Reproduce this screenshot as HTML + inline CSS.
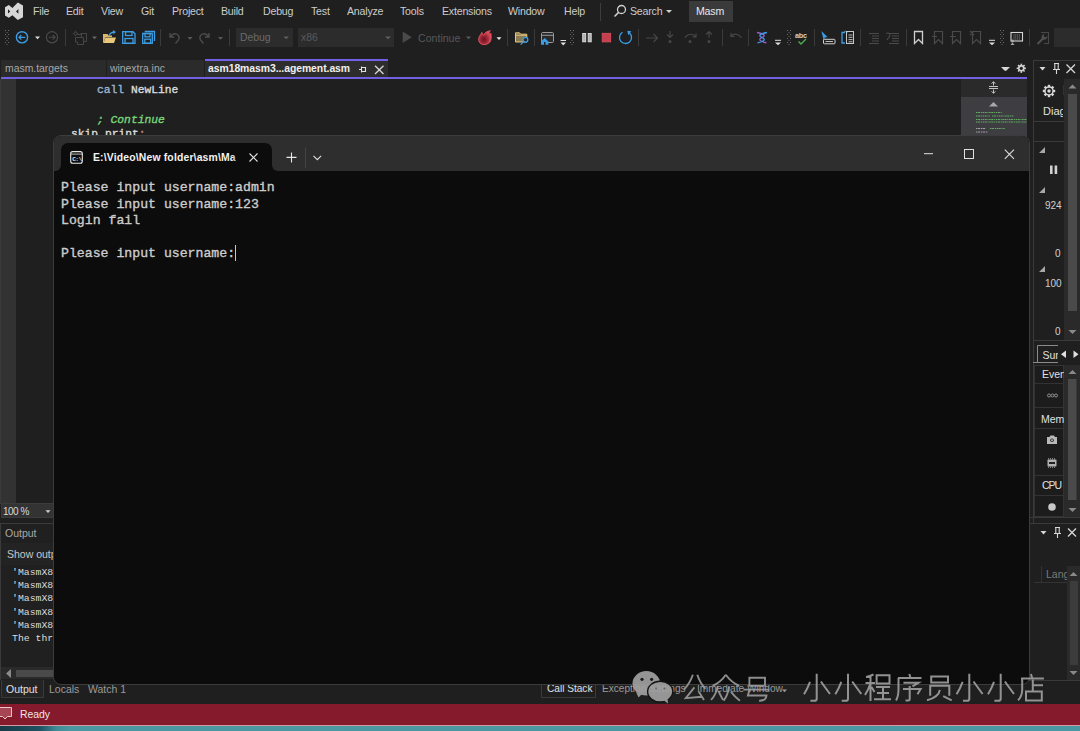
<!DOCTYPE html>
<html><head><meta charset="utf-8">
<style>
*{margin:0;padding:0;box-sizing:border-box}
html,body{width:1080px;height:731px;overflow:hidden;background:#1f1f1f;font-family:"Liberation Sans",sans-serif;color:#d6d6d6}
.a{position:absolute}
.t{position:absolute;white-space:nowrap;line-height:1}
.mono{font-family:"Liberation Mono",monospace}
.menu{font-size:10.6px;letter-spacing:-0.2px;color:#cccccc;top:6px}
.sep{position:absolute;width:1px;background:#3d3d3d}
.dd{position:absolute;width:0;height:0;border-left:3px solid transparent;border-right:3px solid transparent;border-top:3px solid #d0d0d0}
</style></head><body>

<!-- MENU BAR -->
<div class="a" style="left:0;top:0;width:1080px;height:24px;background:#1f1f1f"></div>
<svg class="a" style="left:0;top:0" width="30" height="24" viewBox="0 0 30 24">
<path d="M5 7.2 L8.8 5 L12.4 8 L17.8 2.6 L23 5.5 V17.2 L17.8 20 L12.4 15.2 L8.8 17.8 L5 15.6 Z M8 9.3 L10.2 11.5 L8 13.6 Z M18.4 9 V13.8 L16 11.4 Z" fill="#d6d6d6" fill-rule="evenodd"/>
</svg>
<div class="t menu" style="left:33px">File</div>
<div class="t menu" style="left:66px">Edit</div>
<div class="t menu" style="left:101px">View</div>
<div class="t menu" style="left:141px">Git</div>
<div class="t menu" style="left:172px">Project</div>
<div class="t menu" style="left:221px">Build</div>
<div class="t menu" style="left:263px">Debug</div>
<div class="t menu" style="left:311px">Test</div>
<div class="t menu" style="left:347px">Analyze</div>
<div class="t menu" style="left:400px">Tools</div>
<div class="t menu" style="left:442px">Extensions</div>
<div class="t menu" style="left:508px">Window</div>
<div class="t menu" style="left:564px">Help</div>
<div class="sep" style="left:600px;top:3px;height:18px"></div>
<svg class="a" style="left:613px;top:4px" width="14" height="14" viewBox="0 0 14 14"><circle cx="8.5" cy="5.5" r="4" fill="none" stroke="#cfcfcf" stroke-width="1.3"/><path d="M5.6 8.4 L1.5 12.5" stroke="#cfcfcf" stroke-width="1.5"/></svg>
<div class="t menu" style="left:630px">Search</div>
<div class="dd" style="left:666px;top:10px"></div>
<div class="a" style="left:689px;top:1px;width:44px;height:21px;background:#3a3a3a"></div>
<div class="t menu" style="left:696px;color:#e8e8e8">Masm</div>

<!-- TOOLBAR -->
<svg class="a" style="left:0;top:0" width="1080" height="56" viewBox="0 0 1080 56">
<g fill="#6a6a6a">
<!-- grips -->
<g id="grip"><rect x="5" y="30" width="1" height="1"/><rect x="8" y="30" width="1" height="1"/><rect x="6.5" y="32" width="1" height="1"/><rect x="5" y="34" width="1" height="1"/><rect x="8" y="34" width="1" height="1"/><rect x="6.5" y="36" width="1" height="1"/><rect x="5" y="38" width="1" height="1"/><rect x="8" y="38" width="1" height="1"/><rect x="6.5" y="40" width="1" height="1"/><rect x="5" y="42" width="1" height="1"/><rect x="8" y="42" width="1" height="1"/><rect x="6.5" y="44" width="1" height="1"/></g>
<use href="#grip" x="565"/><use href="#grip" x="782"/><use href="#grip" x="995"/>
</g>
<!-- separators -->
<g fill="#3a3a3a">
<rect x="65" y="29" width="1" height="17"/><rect x="160" y="29" width="1" height="17"/><rect x="229" y="29" width="1" height="17"/>
<rect x="507" y="29" width="1" height="17"/><rect x="534" y="29" width="1" height="17"/><rect x="638" y="29" width="1" height="17"/>
<rect x="722" y="29" width="1" height="17"/><rect x="748" y="29" width="1" height="17"/><rect x="814" y="29" width="1" height="17"/>
<rect x="860" y="29" width="1" height="17"/><rect x="906" y="29" width="1" height="17"/><rect x="1029" y="29" width="1" height="17"/>
</g>
<!-- back / forward -->
<circle cx="22" cy="37.3" r="5.6" fill="none" stroke="#3c9de4" stroke-width="1.4"/>
<path d="M25.3 37.3 H19 M21.3 35 L19 37.3 L21.3 39.6" fill="none" stroke="#3c9de4" stroke-width="1.2"/>
<path d="M35 36.5 H40 L37.5 39.3 Z" fill="#e0e0e0"/>
<circle cx="52" cy="37.3" r="5.6" fill="none" stroke="#4a4a4a" stroke-width="1.2"/>
<path d="M48.7 37.3 H55 M52.7 35 L55 37.3 L52.7 39.6" fill="none" stroke="#4a4a4a" stroke-width="1.1"/>
<!-- new project icon -->
<g fill="none" stroke="#474747" stroke-width="1">
<path d="M80.5 33.5 H86.5 V41.5 H84"/><path d="M75.5 37.5 H83.5 V44.5 H77.5 V42 H75.5 Z"/><path d="M77.5 34.5 H81.5 V37.5"/>
<circle cx="75.5" cy="33.5" r="1.5"/>
</g>
<g stroke="#474747" stroke-width="0.8"><path d="M75.5 30.8 V32 M75.5 35 V36.2 M72.8 33.5 H74 M77 33.5 H78.2"/></g>
<path d="M92 36.5 H97 L94.5 39.3 Z" fill="#666"/>
<!-- open folder -->
<path d="M103 34 H107.5 L108.5 35.5 H112 V37 H105.5 L103.5 43 H103 Z" fill="#d9b86c"/>
<path d="M105.5 37.5 H116 L114 43 H103.5 Z" fill="#e8c878"/>
<path d="M109 36 Q110 32.5 114 32" fill="none" stroke="#3c9de4" stroke-width="1.3"/><path d="M113 30 L116 32 L113.3 34.2 Z" fill="#3c9de4"/>
<!-- save -->
<g fill="none" stroke="#3c9de4" stroke-width="1.3">
<path d="M122.7 31.7 H133 L135 33.7 V43.3 H122.7 Z"/><rect x="125.5" y="31.7" width="6.5" height="3.8"/><rect x="125" y="38.5" width="8" height="4.8"/>
<path d="M144.7 31.5 H154.5 V41"/><path d="M142.7 33.5 H152.3 V43.3 H142.7 Z"/><rect x="145" y="33.5" width="5" height="3.3"/><rect x="144.8" y="39.2" width="5.8" height="4"/>
</g>
<!-- undo redo -->
<g fill="none" stroke="#4e4e4e" stroke-width="1.3">
<path d="M170 33 V37 H174 M170.5 36.5 Q173 33 176.5 34 Q180.5 36 178.5 40 L175.5 43.5"/>
<path d="M209 33 V37 H205 M208.5 36.5 Q206 33 202.5 34 Q198.5 36 200.5 40 L203.5 43.5"/>
</g>
<path d="M187.5 37 H192.5 L190 39.7 Z M218 37 H223 L220.5 39.7 Z" fill="#5a5a5a"/>
<!-- debug / x86 -->
<rect x="236" y="28" width="57" height="19" fill="#2c2c2c"/>
<rect x="298" y="28" width="96" height="19" fill="#2c2c2c"/>
<path d="M283.5 36.5 H289 L286.2 39.3 Z M385 36.5 H391 L388 39.3 Z" fill="#5e5e5e"/>
<!-- continue -->
<path d="M402.7 31.5 L411.8 37.3 L402.7 43 Z" fill="#4a4a4a"/>
<path d="M466 36.5 H471 L468.5 39.3 Z" fill="#5a5a5a"/>
<!-- fire -->
<defs><radialGradient id="fg" cx="0.42" cy="0.62" r="0.55"><stop offset="0" stop-color="#6a1020"/><stop offset="0.55" stop-color="#a02a38"/><stop offset="1" stop-color="#e04a58"/></radialGradient></defs>
<path d="M484 44.6 C480 44.6 477.9 41.5 478.9 37.8 C479.5 35.4 481.3 34 481.8 32.4 C482.5 33.8 482.8 34.8 483.4 35.3 C484.4 32.8 487.3 31 490.3 30.7 C489 32.2 488.8 33.6 489.5 34.6 C490 34.2 490.6 33.7 491 33.2 C490.9 35.2 491.6 37.3 490.8 40.2 C490 43 487.4 44.6 484 44.6 Z" fill="url(#fg)" stroke="#e45262" stroke-width="0.9"/>
<path d="M496.5 37.2 H501.5 L499 40 Z" fill="#e8e8e8"/>
<!-- folder search -->
<path d="M515.5 32.8 H519.5 L520.8 34.2 H526.8 V42 H515.5 Z" fill="#8a7a52" stroke="#e2c77e" stroke-width="1"/>
<path d="M515.5 35.3 H526.8" stroke="#e2c77e" stroke-width="0.9"/>
<circle cx="525.5" cy="39.8" r="2.4" fill="#1f2a33" stroke="#3c9de4" stroke-width="1.2"/><path d="M523.8 41.6 L520.6 44.6" stroke="#3c9de4" stroke-width="1.3"/>
<!-- window home -->
<rect x="541.5" y="32.5" width="12" height="10" rx="1.2" fill="#2a2a2a" stroke="#9a9a9a" stroke-width="1"/><path d="M541.5 35.3 H553.5" stroke="#9a9a9a" stroke-width="1"/>
<path d="M541 41.5 L544.7 38 L548.4 41.5 V44.8 H541 Z" fill="#3c9de4"/><rect x="544" y="42" width="1.5" height="2.8" fill="#1f1f1f"/>
<path d="M560.5 40.5 H566" stroke="#e0e0e0" stroke-width="1"/><path d="M560.5 42.5 H566 L563.25 45.5 Z" fill="#e0e0e0"/>
<!-- pause stop restart -->
<rect x="582.7" y="33.5" width="3" height="8.3" fill="#b0b0b0" stroke="#e0e0e0" stroke-width="0.9"/><rect x="588.2" y="33.5" width="3" height="8.3" fill="#b0b0b0" stroke="#e0e0e0" stroke-width="0.9"/>
<rect x="602.2" y="33.3" width="8.5" height="8.6" fill="#c4404e" stroke="#e05060" stroke-width="0.8"/>
<path d="M629.5 33 A6 6 0 1 1 622.5 32.3" fill="none" stroke="#3c9de4" stroke-width="1.3"/><path d="M627.3 30.8 L631.3 31.2 L628.3 35.3 Z" fill="#3c9de4"/>
<!-- step arrows -->
<g fill="none" stroke="#474747" stroke-width="1.2">
<path d="M646 38 H657.5 M653.5 34 L657.5 38 L653.5 42"/>
<path d="M670 31 V37.5 M667 34.5 L670 37.5 L673 34.5"/>
<path d="M684.8 37.5 Q690 31.5 695.5 36.5 M696 33.5 V37 H692.5"/>
<path d="M709 37.5 V31.5 M706 34.5 L709 31.5 L712 34.5"/>
<path d="M741.5 37.5 Q736 31.5 731 36 M731 33 V36.5 H734.5"/>
</g>
<g fill="#474747"><circle cx="670" cy="41.6" r="1.5"/><circle cx="690" cy="41.6" r="1.5"/><circle cx="709" cy="41.6" r="1.5"/></g>
<!-- colorful -->
<path d="M757 32.5 Q768 34.5 762 37.5 Q756 40.5 766.5 42.8" fill="none" stroke="#9a5ec8" stroke-width="1.3"/>
<path d="M767 32.5 Q756 34.5 762 37.5 Q768 40.5 757.5 42.8" fill="none" stroke="#3c9de4" stroke-width="1.3"/>
<path d="M775 40.3 H781" stroke="#e0e0e0" stroke-width="1"/><path d="M775 42.5 H781 L778 45.3 Z" fill="#e0e0e0"/>
<!-- abc -->
<text x="795" y="38" font-family="Liberation Sans" font-size="7.3" font-weight="bold" fill="#d0d0d0" letter-spacing="-0.2">abc</text>
<path d="M798.5 41.5 L801 44 L806 39" fill="none" stroke="#4caf50" stroke-width="1.4"/>
<!-- cursor & box -->
<path d="M821.3 31 L827.5 37 L824.8 37.5 L823.8 40.5 Z" fill="#3c9de4"/>
<rect x="823.5" y="39.3" width="11.5" height="4.5" rx="0.8" fill="none" stroke="#d0d0d0" stroke-width="1"/><path d="M825.5 41.5 H833" stroke="#d0d0d0" stroke-width="0.9"/>
<path d="M845 32.5 H842 V43 H845" fill="none" stroke="#3c9de4" stroke-width="1.3"/><path d="M843 33 Q845 30 848 32" fill="none" stroke="#3c9de4" stroke-width="1"/>
<rect x="846.5" y="31.5" width="7" height="12" fill="none" stroke="#c8c8c8" stroke-width="1"/>
<g stroke="#c8c8c8" stroke-width="0.9"><path d="M848.5 35 H852.5 M848.5 37.3 H852.5 M848.5 39.6 H852.5 M848.5 41.8 H852.5"/></g>
<!-- indent -->
<g stroke="#4a4a4a" stroke-width="1"><path d="M869 33.5 H879 M872 36 H879 M872 38.5 H879 M872 41 H879 M869 43.5 H879"/>
<path d="M889 33.5 H899 M892 36 H899 M892 38.5 H899 M892 41 H899 M889 43.5 H899"/></g>
<path d="M886 33.5 Q889.5 32 890 35.5 L887 40" fill="none" stroke="#4a4a4a" stroke-width="1.1"/>
<!-- bookmarks -->
<path d="M914.5 31.5 H922.5 V43.5 L918.5 39.5 L914.5 43.5 Z" fill="none" stroke="#d0d0d0" stroke-width="1.3"/>
<g fill="none" stroke="#4a4a4a" stroke-width="1.2">
<path d="M934.5 31.5 H942.5 V43.5 L938.5 39.5 L934.5 43.5 Z M932 36.5 H937"/>
<path d="M952.5 31.5 H960.5 V43.5 L956.5 39.5 L952.5 43.5 Z M950 36.5 H956"/>
<path d="M972.5 31.5 H980.5 V43.5 L976.5 39.5 L972.5 43.5 Z M970 31 L974 35 M974 31 L970 35"/>
</g>
<path d="M989 40.3 H995" stroke="#e0e0e0" stroke-width="1"/><path d="M989 42.5 H995 L992 45.3 Z" fill="#e0e0e0"/>
<!-- breakpoints window icon -->
<rect x="1011" y="32.5" width="11.5" height="8.5" fill="#1f1f1f" stroke="#d8d8d8" stroke-width="1.1"/>
<g stroke="#b0b0b0" stroke-width="0.8" stroke-dasharray="1 0.8"><path d="M1013.5 35 H1020.5 M1013.5 37 H1020.5 M1013.5 39 H1020.5"/></g>
<circle cx="1012.5" cy="41" r="1.5" fill="#a8a8a8"/><path d="M1010.5 45 L1012.5 42.5 L1014.5 45 Z" fill="#a8a8a8"/>
<!-- wrench -->
<path d="M1041 32.5 H1048.5 V43.5 H1044" fill="none" stroke="#474747" stroke-width="1.1"/>
<path d="M1037.5 44 L1043 38.5" stroke="#505050" stroke-width="2"/>
<path d="M1042 39.5 Q1040.5 35 1044.5 33.8 L1043.5 36.3 L1045.5 37.5 L1047.3 35.8 Q1047.8 39.8 1043.5 39.8 Z" fill="#505050"/>
<rect x="1054" y="28" width="26" height="19" fill="#2c2c2c"/>
</svg>


<div class="t" style="left:240px;top:32.5px;font-size:10.4px;color:#6a6a6a">Debug</div>
<div class="t" style="left:301px;top:32.5px;font-size:10.4px;color:#5a5a5a">x86</div>
<div class="t" style="left:418px;top:32.5px;font-size:10.6px;color:#585858">Continue</div>
<!-- TABS -->
<div class="a" style="left:1px;top:60px;width:105px;height:17px;background:#2b2b2b"></div>
<div class="t" style="left:5px;top:63.5px;font-size:10.4px;color:#a8a8a8">masm.targets</div>
<div class="a" style="left:107px;top:60px;width:97px;height:17px;background:#2b2b2b"></div>
<div class="t" style="left:110px;top:63.5px;font-size:10.4px;color:#a8a8a8">winextra.inc</div>
<div class="a" style="left:205px;top:59px;width:183px;height:18px;background:#2d2d2d;border-top:2px solid #7160e8"></div>
<div class="t" style="left:208px;top:63.5px;font-size:10.4px;font-weight:bold;color:#f0f0f0;letter-spacing:-0.05px">asm18masm3...agement.asm</div>
<svg class="a" style="left:350px;top:60px" width="40" height="17" viewBox="350 60 40 17">
  <path d="M359 69.5 H361.5 M361.5 66.5 V72.5 M361.5 67.5 H365.5 V71.5 H361.5" fill="none" stroke="#e0e0e0" stroke-width="1.1"/>
  <path d="M375 65.8 L383.5 74 M383.5 65.8 L375 74" stroke="#d8d8d8" stroke-width="1.3"/>
</svg>
<div class="a" style="left:1px;top:77px;width:1026px;height:2px;background:#7060e2"></div>
<div class="dd" style="left:1002px;top:67px;border-top-color:#d0d0d0;border-left-width:4px;border-right-width:4px;border-top-width:4px"></div>

<!-- EDITOR -->
<div class="a" style="left:0;top:79px;width:16px;height:425px;background:#323232;border-left:1px solid #3a3a3a"></div>
<div class="t mono" style="left:97px;top:85.2px;font-size:11.3px;color:#9cb4d4;-webkit-text-stroke:0.35px #9cb4d4">call <span style="color:#dcdcdc;-webkit-text-stroke:0.35px #dcdcdc">NewLine</span></div>
<div class="t mono" style="left:97px;top:115.2px;font-size:11.3px;color:#7ad67a;font-style:italic;-webkit-text-stroke:0.35px #7ad67a">; Continue</div>
<div class="t mono" style="left:71px;top:129.2px;font-size:11.3px;color:#dcdcdc;-webkit-text-stroke:0.35px #dcdcdc">skip_print<span style="color:#d08a7a;-webkit-text-stroke:0.35px #d08a7a">:</span></div>

<!-- MINIMAP -->
<div class="a" style="left:961px;top:79px;width:66px;height:18px;background:#2a2a2a"></div>
<div class="a" style="left:961px;top:97px;width:66px;height:40px;background:#3e3e42"></div>
<svg class="a" style="left:940px;top:56px" width="140" height="80" viewBox="940 56 140 80">
  <path d="M1001 67 H1009 L1005 71 Z" fill="#d8d8d8"/>
  <g transform="translate(1021.3 68.3)" fill="#cfcfcf">
    <circle r="3.3"/>
    <rect x="-0.8" y="-4.6" width="1.6" height="9.2"/><rect x="-0.8" y="-4.6" width="1.6" height="9.2" transform="rotate(45)"/><rect x="-0.8" y="-4.6" width="1.6" height="9.2" transform="rotate(90)"/><rect x="-0.8" y="-4.6" width="1.6" height="9.2" transform="rotate(135)"/>
    <circle r="1.6" fill="#1f1f1f"/>
  </g>
  <g stroke="#c0c0c0" stroke-width="1" fill="none">
    <path d="M989 86.5 H998 M989 88.5 H998 M993.5 82 V85.5 M993.5 89.5 V93 M991.5 83.5 L993.5 81.8 L995.5 83.5 M991.5 91.5 L993.5 93.2 L995.5 91.5"/>
  </g>
  <path d="M989 106.5 L993.5 102 L998 106.5 Z" fill="#a8a8a8"/>
  <g stroke="#6ccc6c" stroke-width="1" stroke-dasharray="1.5 0.6 2 0.8 1 0.7" opacity="0.8">
    <path d="M976 112.5 H1002 M976 116 H990 M992 116 H1014 M976 119.5 H1027 M976 122 H1027 M990 128.5 H1005"/>
  </g>
  <g stroke="#bbbbbb" stroke-width="1" stroke-dasharray="1.5 0.6 2 0.8" opacity="0.8"><path d="M976 128.5 H986 M976 132 H988"/></g>
</svg>

<!-- RIGHT PANEL -->
<div class="a" style="left:1033px;top:60px;width:47px;height:464px;background:#1f1f1f;border-left:1px solid #3a3a3a;border-top:1px solid #3a3a3a"></div>
<svg class="a" style="left:1029px;top:56px" width="51" height="650" viewBox="1029 56 51 650">
  <!-- header -->
  <path d="M1039.5 67 H1045.5 L1042.5 70.5 Z" fill="#d8d8d8"/>
  <path d="M1054 63.5 H1059 M1054.8 63.5 V69.5 H1058.2 V63.5 M1053 69.5 H1060 M1056.5 69.5 V74" fill="none" stroke="#d8d8d8" stroke-width="1.1"/>
  <path d="M1066.5 64.5 L1075 73 M1075 64.5 L1066.5 73" stroke="#d8d8d8" stroke-width="1.3"/>
  <!-- scrollbar -->
  <rect x="1064" y="79" width="16" height="262" fill="#2a2a2a"/>
  <rect x="1068" y="94" width="9" height="217" fill="#4a4a4a"/>
  <path d="M1068.5 88.5 L1072.5 84.5 L1076.5 88.5 Z" fill="#8a8a8a"/>
  <path d="M1068.5 330 L1072.5 334 L1076.5 330 Z" fill="#8a8a8a"/>
  <!-- gear -->
  <g transform="translate(1049 91)" fill="#d8d8d8">
    <circle r="4.7"/>
    <g><rect x="-1.2" y="-6.2" width="2.4" height="12.4"/><rect x="-1.2" y="-6.2" width="2.4" height="12.4" transform="rotate(45)"/><rect x="-1.2" y="-6.2" width="2.4" height="12.4" transform="rotate(90)"/><rect x="-1.2" y="-6.2" width="2.4" height="12.4" transform="rotate(135)"/></g>
    <circle r="3.3" fill="#1f1f1f"/>
    <circle r="1.7" fill="#d8d8d8"/>
  </g>
  <rect x="1063" y="85" width="1" height="10" fill="#333"/>
  <path d="M1034 121.5 H1064 M1034 141.5 H1064" stroke="#3a3a3a" stroke-width="1"/>
  <!-- triangles & pause -->
  <path d="M1039 153 L1045 147 V153 Z M1039 193 L1045 187 V193 Z M1039 272 L1045 266 V272 Z" fill="#a8a8a8"/>
  <rect x="1050" y="165.5" width="2.6" height="8.5" fill="#d0d0d0"/><rect x="1054.6" y="165.5" width="2.6" height="8.5" fill="#d0d0d0"/>
  <path d="M1033 340.5 H1080" stroke="#3a3a3a" stroke-width="1"/>
  <!-- Sur tabs -->
  <path d="M1037.5 362 V345.5 H1058" fill="none" stroke="#8a8a8a" stroke-width="1"/>
  <path d="M1033 362.5 H1058" stroke="#8a8a8a" stroke-width="1"/>
  <path d="M1066 350.5 V358 L1061 354.2 Z" fill="#e0e0e0"/>
  <path d="M1073.5 350.5 V358 L1078.5 354.2 Z" fill="#e0e0e0"/>
  <!-- rows -->
  <rect x="1034" y="365" width="30" height="152" fill="#1c1c1c"/>
  <g stroke="#333" stroke-width="1" fill="none">
    <rect x="1034.5" y="365.5" width="29" height="151"/>
    <path d="M1034 383.5 H1064 M1034 407.5 H1064 M1034 428.5 H1064 M1034 475.5 H1064 M1034 495.5 H1064"/>
  </g>
  <rect x="1064" y="365" width="16" height="152" fill="#2a2a2a"/>
  <rect x="1068" y="379" width="8.5" height="121" fill="#4a4a4a"/>
  <path d="M1068.5 374 L1072.5 370 L1076.5 374 Z" fill="#8a8a8a"/>
  <path d="M1068.5 508 L1072.5 512 L1076.5 508 Z" fill="#8a8a8a"/>
  <g fill="none" stroke="#9a9a9a" stroke-width="0.9">
    <circle cx="1049" cy="395.5" r="1.5"/><circle cx="1052.5" cy="395.5" r="1.5"/><circle cx="1056" cy="395.5" r="1.5"/>
  </g>
  <path d="M1047 437 H1049.5 L1050.5 435.5 H1054 L1055 437 H1057 V444 H1047 Z" fill="#b8b8b8"/><circle cx="1052" cy="440.3" r="1.8" fill="#1f1f1f"/><circle cx="1052" cy="440.3" r="1" fill="#b8b8b8"/>
  <rect x="1047.5" y="459.5" width="9" height="7" rx="0.8" fill="#b0b0b0"/><rect x="1049" y="462" width="6" height="2" fill="#1f1f1f"/>
  <path d="M1048.5 458 V459.5 M1050.5 458 V459.5 M1052.5 458 V459.5 M1054.5 458 V459.5 M1048.5 466.5 V468 M1050.5 466.5 V468 M1052.5 466.5 V468 M1054.5 466.5 V468" stroke="#9a9a9a" stroke-width="0.8"/>
  <circle cx="1052" cy="507" r="3.8" fill="#c8c8c8"/>
  <path d="M1030 517.5 H1080" stroke="#3a3a3a" stroke-width="1"/>
  <path d="M1029 523.5 H1080" stroke="#3a3a3a" stroke-width="1"/>
  <!-- second panel -->
  <path d="M1040.5 531 H1046.5 L1043.5 534.5 Z" fill="#d8d8d8"/>
  <path d="M1055 527.5 H1060 M1055.8 527.5 V533.5 H1059.2 V527.5 M1054 533.5 H1061 M1057.5 533.5 V538" fill="none" stroke="#d8d8d8" stroke-width="1.1"/>
  <path d="M1068 528.5 L1076 536.5 M1076 528.5 L1068 536.5" stroke="#d8d8d8" stroke-width="1.3"/>
  <path d="M1034 582.5 H1067 M1041.5 566 V582" stroke="#333" stroke-width="1"/>
  <rect x="1067" y="566" width="13" height="114" fill="#2a2a2a"/>
  <rect x="1070" y="581" width="8" height="84" fill="#3c3c3c"/>
  <path d="M1069.5 576 L1073.5 572 L1077.5 576 Z" fill="#8a8a8a"/>
  <path d="M1069.5 671 L1073.5 675 L1077.5 671 Z" fill="#8a8a8a"/>
  <path d="M1029.5 523 V680" stroke="#3a3a3a" stroke-width="1"/>
  <path d="M1029 680.5 H1080" stroke="#3a3a3a" stroke-width="1"/>
</svg>
<div class="a" style="left:1040px;top:102px;width:23px;height:18px;overflow:hidden"><div class="t" style="left:3px;top:4px;font-size:11px;color:#e0e0e0">Diag</div></div>
<div class="t" style="left:1045px;top:201px;font-size:10px;color:#d0d0d0">924</div>
<div class="t" style="left:1055px;top:249px;font-size:10px;color:#d0d0d0">0</div>
<div class="t" style="left:1045px;top:279px;font-size:10px;color:#d0d0d0">100</div>
<div class="t" style="left:1055px;top:327px;font-size:10px;color:#d0d0d0">0</div>
<div class="a" style="left:1038px;top:346px;width:20px;height:16px;overflow:hidden"><div class="t" style="left:4.5px;top:4px;font-size:10.5px;color:#e0e0e0">Sur</div></div>
<div class="a" style="left:1034px;top:366px;width:30px;height:17px;overflow:hidden"><div class="t" style="left:8px;top:3px;font-size:10.5px;color:#e0e0e0">Even</div></div>
<div class="a" style="left:1034px;top:408px;width:30px;height:20px;overflow:hidden"><div class="t" style="left:7px;top:5.5px;font-size:10.5px;color:#e0e0e0">Mem</div></div>
<div class="t" style="left:1042px;top:480px;font-size:10.5px;color:#e0e0e0;letter-spacing:-1px">CPU</div>
<div class="a" style="left:1042px;top:566px;width:25px;height:16px;overflow:hidden"><div class="t" style="left:4px;top:3px;font-size:10.5px;color:#7a7a7a">Lang</div></div>
<!-- ZOOM BOX -->
<div class="a" style="left:1px;top:503px;width:53px;height:15px;background:#333333;border:1px solid #3c3c3c"></div>
<div class="t" style="left:3px;top:506.5px;font-size:10px;letter-spacing:-0.5px;color:#d8d8d8">100 %</div>
<svg class="a" style="left:0;top:500px" width="60" height="20"><path d="M45.5 10.2 H50.5 L48 13 Z" fill="#d0d0d0"/></svg>

<!-- OUTPUT PANEL -->
<div class="a" style="left:0;top:523px;width:54px;height:157px;background:#202020;border-left:1px solid #3a3a3a;border-top:1px solid #3a3a3a"></div>
<div class="t" style="left:5px;top:528px;font-size:10.5px;color:#a8a8a8">Output</div>
<div class="a" style="left:1px;top:543px;width:53px;height:22px;background:#232323"></div>
<div class="t" style="left:7px;top:549px;font-size:10.5px;color:#c8c8c8">Show output</div>
<div class="t mono" style="left:12px;top:566px;font-size:9.8px;color:#dcdcdc;line-height:13.2px;white-space:pre">'MasmX8
'MasmX8
'MasmX8
'MasmX8
'MasmX8
The thr</div>
<div class="a" style="left:1px;top:667px;width:53px;height:12px;background:#2a2a2a"></div>
<div class="a" style="left:16px;top:670px;width:38px;height:7px;background:#4a4a4a"></div>
<svg class="a" style="left:0;top:660px" width="20" height="20"><path d="M11 9 V18 L6 13.5 Z" fill="#8a8a8a"/></svg>

<!-- BOTTOM TABS -->
<div class="a" style="left:1px;top:680px;width:43px;height:18px;background:#242424;border:1px solid #3a3a3a;border-top:none"></div>
<div class="t" style="left:6px;top:684px;font-size:10.5px;color:#e0e0e0">Output</div>
<div class="t" style="left:49px;top:684px;font-size:10.5px;color:#9a9a9a">Locals</div>
<div class="t" style="left:88px;top:684px;font-size:10.5px;color:#9a9a9a">Watch 1</div>
<div class="a" style="left:541px;top:684px;width:55px;height:14px;border:1px solid #3a3a3a;border-top:none"></div>
<div class="t" style="left:547px;top:684px;font-size:10.1px;color:#e0e0e0">Call Stack</div>
<div class="t" style="left:602px;top:684px;font-size:10.1px;color:#9a9a9a">Exception Settings</div>
<div class="t" style="left:697px;top:684px;font-size:10.1px;color:#9a9a9a">Immediate Window</div>
<svg class="a" style="left:780px;top:684px" width="10" height="14"><path d="M2 5.5 H7 L4.5 8.3 Z" fill="#9a9a9a"/></svg>

<!-- STATUS BAR -->
<div class="a" style="left:0;top:704px;width:1080px;height:21px;background:#861a2d"></div>
<div class="a" style="left:0;top:725px;width:1080px;height:1px;background:#d49aa4"></div>
<div class="a" style="left:0;top:726px;width:1080px;height:5px;background:linear-gradient(90deg,#173a46 0px,#1f5262 40px,#3f8a96 56px,#4b97a1 70px,#4a98a4 1080px)"></div>
<svg class="a" style="left:0;top:704px" width="16" height="20"><path d="M-1 3.5 H11.5 V12.5 H7.5 L5 15 L2.5 12.5 H-1 Z" fill="#a84555" stroke="#e8c8cc" stroke-width="1"/></svg>
<div class="t" style="left:20px;top:709.5px;font-size:10.4px;color:#f0e4e6">Ready</div>

<!-- CONSOLE WINDOW -->
<div class="a" style="left:53px;top:135px;width:977px;height:550px;background:#0c0c0c;border-radius:8px;overflow:hidden;border:1px solid #3c3c3c">
  <div class="a" style="left:0;top:0;width:977px;height:35px;background:#2e2e2e"></div>
  <div class="a" style="left:2px;top:29px;width:6px;height:6px;background:#0c0c0c;border-radius:0 0 0 0"></div>
  <div class="a" style="left:7px;top:7px;width:211px;height:28px;background:#0c0c0c;border-radius:7px 7px 0 0"></div>
  <div class="a" style="left:0;top:29px;width:7px;height:6px;background:#2e2e2e;border-radius:0 0 6px 0"></div>
  <div class="a" style="left:218px;top:29px;width:7px;height:6px;background:#0c0c0c"></div>
  <div class="a" style="left:218px;top:29px;width:7px;height:6px;background:#2e2e2e;border-radius:0 0 0 6px"></div>
  <svg class="a" style="left:16px;top:15px" width="14" height="14" viewBox="0 0 14 14">
    <rect x="0.7" y="0.6" width="11.6" height="11.6" rx="2" fill="none" stroke="#e8e8e8" stroke-width="1.1"/>
    <path d="M1 3.1 H12.3" stroke="#e8e8e8" stroke-width="0.8"/>
    <text x="2.2" y="10.4" font-family="Liberation Mono" font-size="6.2" font-weight="bold" fill="#e0e0e0" letter-spacing="-0.6">C:\</text>
  </svg>
  <div class="t" style="left:39px;top:17px;font-size:10.4px;font-weight:bold;letter-spacing:0.17px;color:#f2f2f2">E:\Video\New folder\asm\Ma</div>
  <div class="a" style="left:178px;top:12px;width:12px;height:18px;background:linear-gradient(90deg,rgba(12,12,12,0),rgba(12,12,12,0.6) 60%,#0c0c0c)"></div>
  <svg class="a" style="left:0;top:0" width="977" height="35" viewBox="0 0 977 35">
    <path d="M195.5 17.5 L203.5 25.5 M203.5 17.5 L195.5 25.5" stroke="#e0e0e0" stroke-width="1.1"/>
    <path d="M232.5 21.4 H242.5 M237.5 16.4 V26.4" stroke="#e8e8e8" stroke-width="1.1"/>
    <path d="M251.5 11.5 V32" stroke="#444" stroke-width="1"/>
    <path d="M259.5 19.8 L263.3 23.6 L267.1 19.8" fill="none" stroke="#e0e0e0" stroke-width="1.1"/>
    <path d="M870 17.7 H879" stroke="#e0e0e0" stroke-width="1"/>
    <rect x="910.5" y="13.5" width="9" height="9" fill="none" stroke="#e0e0e0" stroke-width="1"/>
    <path d="M950.8 13.6 L960 22.8 M960 13.6 L950.8 22.8" stroke="#e0e0e0" stroke-width="1.05"/>
  </svg>
  <div class="t mono" style="left:7px;top:44px;font-size:13.2px;line-height:16.6px;color:#cccccc;white-space:pre;-webkit-text-stroke:0.35px #cccccc">Please input username:admin
Please input username:123
Login fail

Please input username:</div>
  <div class="a" style="left:181px;top:108.6px;width:1px;height:16.4px;background:#c8c8c8"></div>
</div>

<!-- WATERMARK -->
<svg class="a" style="left:0;top:0;opacity:0.9" width="1080" height="731" viewBox="0 0 1080 731">
<g fill="#a3a3a3">
  <ellipse cx="646.3" cy="683.3" rx="13.8" ry="12.2"/>
  <path d="M636 692 L638.5 697.5 L642.5 693.5 Z"/>
</g>
<circle cx="642" cy="679.3" r="1.6" fill="#1a1a1a"/><circle cx="651.6" cy="679.3" r="1.6" fill="#1a1a1a"/>
<ellipse cx="660.2" cy="691.6" rx="12.6" ry="10.4" fill="#a3a3a3" stroke="#141414" stroke-width="1.4"/>
<path d="M664 700.5 L668 703.5 L667.5 698 Z" fill="#a3a3a3"/>
<circle cx="656.2" cy="688.5" r="1.1" fill="#1a1a1a" opacity="0.4"/><circle cx="664.5" cy="688.5" r="1.1" fill="#1a1a1a" opacity="0.4"/>
<g fill="none" stroke="#9c9c9c" stroke-width="1.9" stroke-linecap="butt" stroke-linejoin="miter">
  <!-- 公 -->
  <g transform="translate(684 674)"><path d="M8.9 0.7 Q6 9 0 15.6 M13.3 0.7 Q16 9 21.5 14.8 M10.4 13.3 L1.8 24.2 L17.8 22.8 M14.8 17.8 L20 25.9"/></g>
  <!-- 众 -->
  <g transform="translate(711 674)"><path d="M14.8 0.7 Q10 8 1.5 11.9 M14.8 0.7 Q20 8 28.3 11.9 M6.8 11.9 Q5 21 0 25.9 M7.4 17 L11.9 25.9 M18 12.6 Q17 21 12.6 26.7 M20 17.8 Q24 23 28.9 26.7"/></g>
  <!-- 号 -->
  <g transform="translate(743.5 674)"><path d="M5.9 3.7 H21.5 V11.9 H5.9 Z M0 15.6 H25.9 M6 15.6 L4.4 21.5 H23 Q22.5 27 15.6 26.7"/></g>
</g>
<g fill="none" stroke="#a0a0a0" stroke-width="2.0" stroke-linecap="butt">
  <!-- 小 -->
  <g id="xiao" transform="translate(803.4 673.8)"><path d="M13.3 0 V25.2 Q13.3 27 11 27 H7 M6.6 8 Q4 15 0.6 20.5 M17.5 7.7 Q22 14 26.6 20.2"/></g>
  <use href="#xiao" x="31.3"/>
  <!-- 程 -->
  <g transform="translate(865.4 673.8)"><path d="M8.1 0.7 Q4.5 2.5 0.6 3.2 M0.1 9.2 H9.6 M5.1 2.2 V27.2 M4.8 10.2 Q3 16 -0.4 21.2 M6.1 13.2 L9.1 18.2 M11.2 1.4 H24.1 V9.6 H11.2 Z M10.6 13.2 H24.6 M11.6 19.2 H23.6 M8.6 25.5 H25.6 M17.6 13.2 V25.5"/></g>
  <!-- 序 -->
  <g transform="translate(895 673.8)"><path d="M14.3 0.2 L15.5 4 M3 4.2 H26.5 M3.5 4.2 V16 Q3.3 23 1 26.7 M8.4 9 H23.4 L17.5 12.5 M8 15.3 H25.6 L22.5 20.5 M14.7 12.2 V25.2 Q14.7 26.7 13 26.7 H10.5"/></g>
  <!-- 员 -->
  <g transform="translate(927 673.8)"><path d="M4.2 2.6 H21 V8.6 H4.2 Z M3.2 22 V11.9 H22.3 V22 M12.8 16 Q12 23 0 26.5 M16.2 22.3 L24.7 26.5"/></g>
  <use href="#xiao" x="152.6"/>
  <use href="#xiao" x="184"/>
  <!-- 店 -->
  <g transform="translate(1018 673.8)"><path d="M13 0.2 L14.2 4.6 M3 4.8 H25.9 M4.2 4.8 V16 Q4 23 0 26.5 M14.8 6 V17.7 M14.8 11.5 H25 M8 17.7 V26.6 H23.8 V17.7 Z"/></g>
</g>
</svg>
</body></html>
